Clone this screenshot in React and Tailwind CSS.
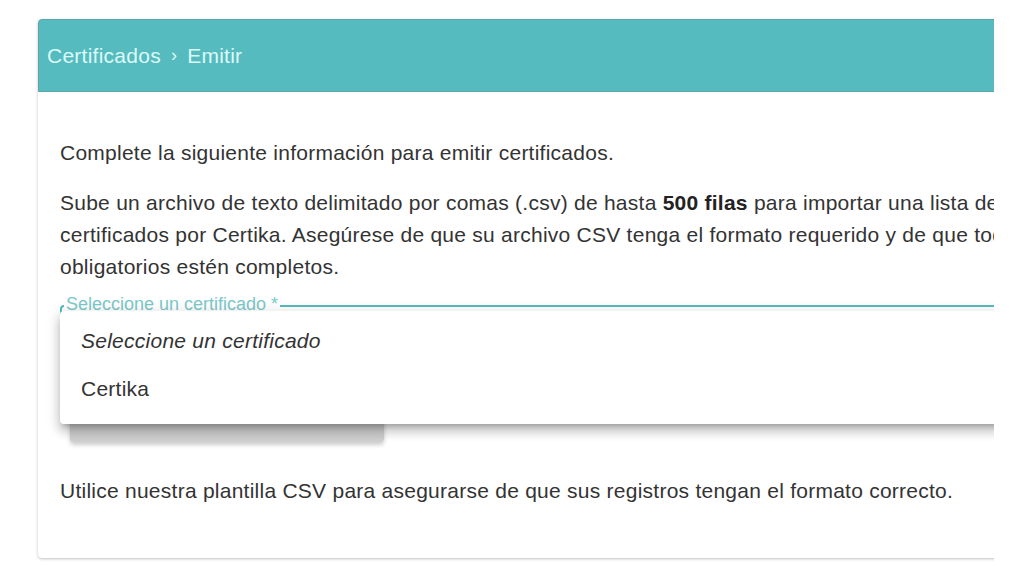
export default function App() {
  return (
    <div className="w-[1022px] h-[574px] bg-white overflow-hidden font-['Liberation_Sans',Arial,sans-serif]">
      <div className="ml-[30px] mt-[11px] w-[964px] overflow-hidden pl-[8px] pt-[8px] pb-[10px]">
        <div className="w-[1100px] bg-white rounded-[4px] shadow-[0_1px_3px_rgba(0,0,0,0.25)]">
          <div className="h-[73px] bg-[#55bbbe] rounded-t-[4px] border border-[#5aa6a8] flex items-center px-[8px] text-[21px] tracking-[0.25px] text-[#dcfafa]">
            <span>Certificados</span>
            <span className="mx-[10px] text-[18px]">›</span>
            <span>Emitir</span>
          </div>
          <div className="px-[22px] pt-[45px] pb-[51px] text-[21px] leading-[32px] tracking-[0.25px] text-[#333]">
            <p className="whitespace-nowrap">Complete la siguiente información para emitir certificados.</p>
            <p className="mt-[18px] whitespace-nowrap">
              Sube un archivo de texto delimitado por comas (.csv) de hasta <b className="font-bold text-[#222]">500 filas</b> para importar una lista de destinatarios
              <br />
              certificados por Certika. Asegúrese de que su archivo CSV tenga el formato requerido y de que todos los campos
              <br />
              obligatorios estén completos.
            </p>
            <div className="relative mt-[22px]">
              <div className="h-[56px] border-2 border-[#55bbbe] rounded-[4px]"></div>
              <span className="absolute left-[4px] top-[-11px] px-[2px] bg-white text-[18px] leading-[20px] tracking-normal text-[#7cc8ca]">
                Seleccione un certificado *
              </span>
              <div className="mt-[37px] ml-[10px] w-[314px] h-[44px] rounded-[4px] bg-[#cfcfcf] shadow-[0_3px_4px_rgba(0,0,0,0.2)]"></div>
              <div className="absolute left-0 top-[6px] w-[1000px] h-[113px] bg-white rounded-[4px] pt-[6px] shadow-[0_5px_5px_-3px_rgba(0,0,0,0.2),0_8px_10px_1px_rgba(0,0,0,0.14),0_3px_14px_2px_rgba(0,0,0,0.12)]">
                <div className="h-[48px] flex items-center pl-[21px] italic">Seleccione un certificado</div>
                <div className="h-[48px] flex items-center pl-[21px]">Certika</div>
              </div>
            </div>
            <p className="mt-[33px] whitespace-nowrap">Utilice nuestra plantilla CSV para asegurarse de que sus registros tengan el formato correcto.</p>
          </div>
        </div>
      </div>
    </div>
  );
}
